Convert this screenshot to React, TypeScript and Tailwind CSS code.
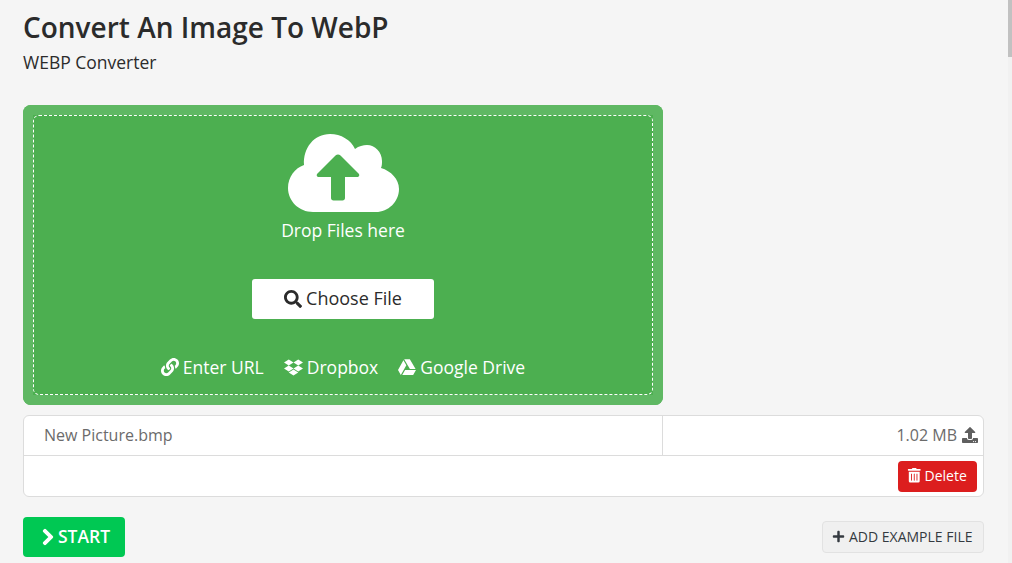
import { FaChevronRight, FaDropbox, FaGoogleDrive, FaLink, FaPlus, FaSearch, FaTrashAlt, FaUpload } from "react-icons/fa";

const CloudUpload = () => (
  <svg viewBox="0 0 111 78" className="h-[78px] w-[111px]">
    <path
      fill="#fff"
      d="M25 78C11 78 0 67 0 54 0 43 7 34 16 31 15 14 26 0 42 0 53 0 63 6 67 15 71 12 75 11 79 11 87 11 94 18 94 27 94 29 94 32 93 34 103 37 111 45 111 55 111 68 100 78 88 78Z"
    />
    <path
      fill="#4caf50"
      d="M47.500 21.500c1.500-1.500 3.500-1.500 5 0l18 18c1.500 1.500.8 3.500-1.500 3.500H57v21c0 1.500-1 2.500-2.500 2.500h-9c-1.500 0-2.500-1-2.500-2.500V43H31c-2.300 0-3-2-1.500-3.500z"
    />
  </svg>
);

export default function App() {
  return (
    <div className="flex h-screen overflow-hidden bg-[#f5f5f5] font-['Open_Sans',sans-serif] text-[#2b2b2b]">
      <main className="w-[1008px] pl-[23px] pr-6">
        <h1 className="mt-[9px] text-[28px] leading-[36px] font-semibold">Convert An Image To WebP</h1>
        <p className="mt-[5px] text-[17.500px] leading-[24px]">WEBP Converter</p>

        {/* Drop zone */}
        <div className="mt-[31px] w-[640px] rounded-lg bg-[#4caf50] p-[10px] shadow-[inset_0_0_0_10px_#5fb863]">
          <div className="flex h-[280px] flex-col items-center rounded-md border border-dashed border-white pt-[18px] text-white">
            <CloudUpload />
            <p className="mt-[6px] mb-[1px] text-[17.500px] leading-6">Drop Files here</p>
            <button className="mt-[36px] flex h-10 w-[182px] items-center justify-center gap-[4px] rounded-[3px] bg-white pb-[1px] text-[18px] font-medium text-[#2b2b2b]">
              <FaSearch className="text-[18px]" />
              Choose File
            </button>
            <div className="mt-[36px] flex items-center gap-5 text-[17.500px] leading-6">
              <span className="flex items-center gap-[4px]"><FaLink className="text-[18px]" /> Enter URL</span>
              <span className="flex items-center gap-[4px]"><FaDropbox className="text-[19px]" /> Dropbox</span>
              <span className="flex items-center gap-[4px]"><FaGoogleDrive className="text-[18px]" /> Google Drive</span>
            </div>
          </div>
        </div>

        {/* File row */}
        <div className="mt-[10px] w-[961px] rounded-md border border-[#dcdcdc] bg-white text-[#6b6b6b]">
          <div className="flex h-[40px] border-b border-[#dcdcdc]">
            <div className="flex w-[639px] items-center border-r border-[#dcdcdc] pb-[1px] pl-5 text-base">New Picture.bmp</div>
            <div className="flex flex-1 items-center justify-end gap-[5px] pr-[5px] pb-[1px] text-base">
              1.02 MB <FaUpload className="text-[16px] text-[#5f5f5f]" />
            </div>
          </div>
          <div className="flex h-[40px] items-center justify-end pr-[6px]">
            <button className="flex h-[31px] w-[79px] items-center gap-[3px] rounded bg-[#dc1e1e] pb-[1px] pl-[9px] text-[14px] text-white">
              <FaTrashAlt className="text-[14.500px]" /> Delete
            </button>
          </div>
        </div>

        {/* Actions */}
        <div className="mt-5 flex w-[961px] items-center justify-between">
          <button className="flex h-10 w-[102px] items-center gap-[1px] rounded bg-[#00c853] pb-[1px] pl-[16px] text-[17.500px] font-semibold text-white">
            <FaChevronRight className="stroke-[30] text-[18px]" /> START
          </button>
          <button className="flex h-[32px] w-[162px] items-center gap-[4px] rounded border border-[#e2e2e2] bg-[#f0f0f0] pb-[1px] pl-[9px] text-[14px] text-[#343a40]">
            <FaPlus className="text-[13px]" /> ADD EXAMPLE FILE
          </button>
        </div>
      </main>

      {/* Scrollbar */}
      <div className="h-full w-1 bg-[#f1f1f1]">
        <div className="h-[57px] w-full bg-[#c1c1c1]" />
      </div>
    </div>
  );
}
